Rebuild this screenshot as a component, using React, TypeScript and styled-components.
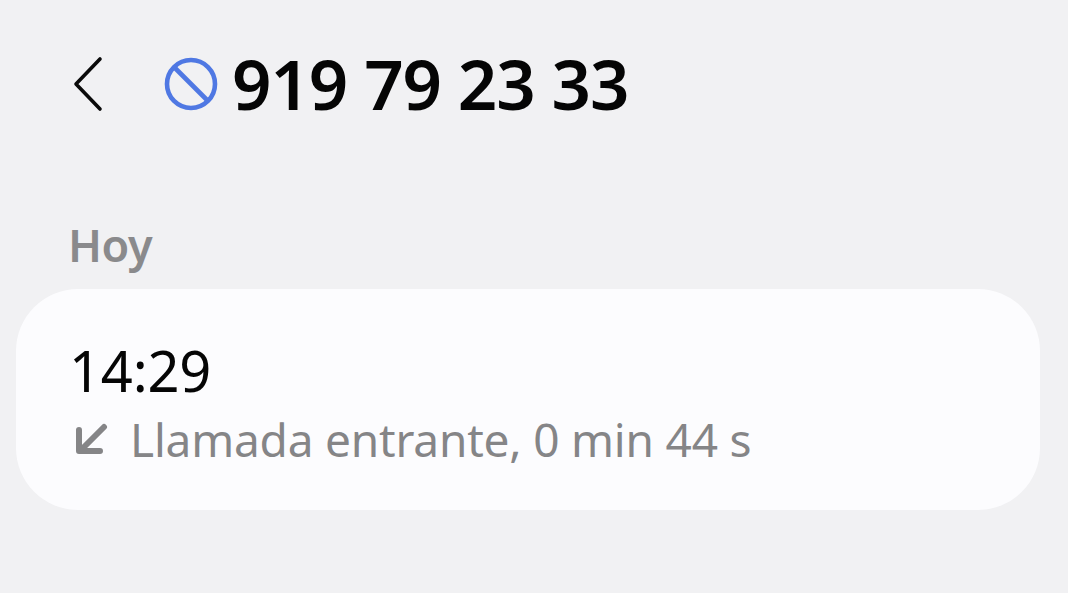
import React from "react";
import styled, { createGlobalStyle } from "styled-components";

const Global = createGlobalStyle`
  html, body { margin: 0; padding: 0; background: #f1f1f3; }
`;
const Page = styled.div`
  width: 1068px; height: 593px; box-sizing: border-box; background: #f1f1f3; overflow: hidden;
  padding: 48px 28px 0 16px; font-family: "Noto Sans", Roboto, sans-serif;
  display: flex; flex-direction: column;
`;
const Header = styled.div`
  display: flex; align-items: center; height: 72px; padding-left: 56px;
`;
const Back = styled.svg`width: 32px; height: 56px; flex: none; margin-right: 60px;`;
const Block = styled.svg`width: 54px; height: 54px; flex: none; margin-right: 14px;`;
const Number = styled.h1`
  margin: -2px 0 0; font-size: 69px; font-weight: 600; color: #050505; line-height: 72px; letter-spacing: -1.05px;
`;
const Section = styled.div`
  font-size: 45px; font-weight: 600; color: #8a8a8c; line-height: 50px; margin: 100px 0 19px 52px;
  letter-spacing: -0.4px;
`;
const Card = styled.div`
  height: 221px; border-radius: 62px; background: #fcfcfe; padding: 50px 0 0 53px; box-sizing: border-box;
`;
const Time = styled.div`font-size: 56px; color: #050505; line-height: 62px; letter-spacing: -0.2px;`;
const Detail = styled.div`display: flex; align-items: center; gap: 22px; margin-top: 11px; margin-left: 6px;`;
const Arrow = styled.svg`width: 33px; height: 33px; flex: none;`;
const DetailText = styled.span`font-size: 46px; color: #858587; line-height: 54px; letter-spacing: -0.2px;`;

export default function App() {
  return (
    <Page>
      <Global />
      <Header>
        <Back viewBox="0 0 32 56"><path d="M28 3 L4 28 L28 53" fill="none" stroke="#0a0a0a" strokeWidth="3.6" strokeLinecap="round" strokeLinejoin="round" /></Back>
        <Block viewBox="0 0 54 54">
          <circle cx="27" cy="27" r="24" fill="none" stroke="#4f78e3" strokeWidth="4.6" />
          <path d="M10 10 L44 44" stroke="#4f78e3" strokeWidth="4.6" />
        </Block>
        <Number>919 79 23 33</Number>
      </Header>
      <Section>Hoy</Section>
      <Card>
        <Time>14:29</Time>
        <Detail>
          <Arrow viewBox="0 0 33 33"><path d="M29 4 L8 25 M4 7 V28 H25" fill="none" stroke="#858587" strokeWidth="6" strokeLinecap="round" strokeLinejoin="round" /></Arrow>
          <DetailText>Llamada entrante, 0 min 44 s</DetailText>
        </Detail>
      </Card>
    </Page>
  );
}
